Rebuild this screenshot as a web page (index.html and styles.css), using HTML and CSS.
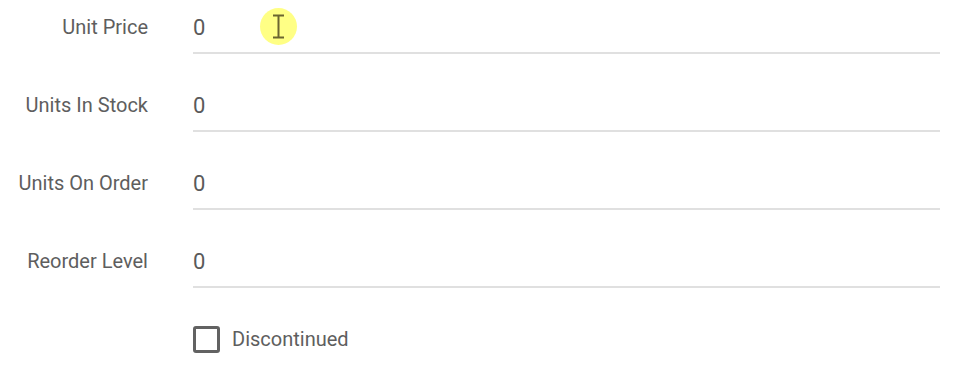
FILE: index.html
```html
<!DOCTYPE html>
<html>
<head>
<meta charset="utf-8">
<link rel="stylesheet" href="styles.css">
</head>
<body>
<form class="form">
  <div class="row">
    <label class="label">Unit Price</label>
    <div class="field"><input class="input" type="text" value="0"></div>
  </div>
  <div class="row">
    <label class="label">Units In Stock</label>
    <div class="field"><input class="input" type="text" value="0"></div>
  </div>
  <div class="row">
    <label class="label">Units On Order</label>
    <div class="field"><input class="input" type="text" value="0"></div>
  </div>
  <div class="row">
    <label class="label">Reorder Level</label>
    <div class="field"><input class="input" type="text" value="0"></div>
  </div>
  <div class="row check-row">
    <span></span>
    <label class="check"><span class="box"></span><span class="check-text">Discontinued</span></label>
  </div>
</form>
<div class="cursor-spot">
  <svg width="15" height="25" viewBox="0 0 15 25"><path d="M2 1.5h11M7.5 1.5v22M2 23.5h11" stroke="#6b6530" stroke-width="2" fill="none"/></svg>
</div>
</body>
</html>
```
FILE: styles.css
```css
html, body {
  margin: 0;
  padding: 0;
  background: #ffffff;
}
body {
  font-family: Roboto, "Noto Sans", "Liberation Sans", sans-serif;
  position: relative;
  width: 959px;
  height: 382px;
  overflow: hidden;
}
.form {
  display: flex;
  flex-direction: column;
  gap: 24px;
  padding-right: 19px;
}
.row {
  display: grid;
  grid-template-columns: 148px 1fr;
  column-gap: 45px;
  align-items: center;
  height: 54px;
}
.label {
  text-align: right;
  font-size: 20px;
  color: #5e5e5e;
  white-space: nowrap;
}
.field {
  height: 54px;
  box-sizing: border-box;
  padding-top: 2px;
  border-bottom: 2px solid #e0e0e0;
  display: flex;
  align-items: center;
}
.input {
  border: none;
  outline: none;
  padding: 0;
  margin: 0;
  width: 100%;
  background: transparent;
  font-family: Roboto, "Noto Sans", "Liberation Sans", sans-serif;
  font-size: 22px;
  color: #5a5a5a;
}
.check {
  display: flex;
  align-items: center;
  gap: 12px;
}
.box {
  width: 27px;
  height: 27px;
  box-sizing: border-box;
  border: 3px solid #626262;
  border-radius: 3px;
}
.check-text {
  font-size: 20px;
  color: #5e5e5e;
}
.cursor-spot {
  position: absolute;
  left: 260px;
  top: 8px;
  width: 37px;
  height: 37px;
  border-radius: 50%;
  background: #ffff85;
  display: flex;
  align-items: center;
  justify-content: center;
}
```
